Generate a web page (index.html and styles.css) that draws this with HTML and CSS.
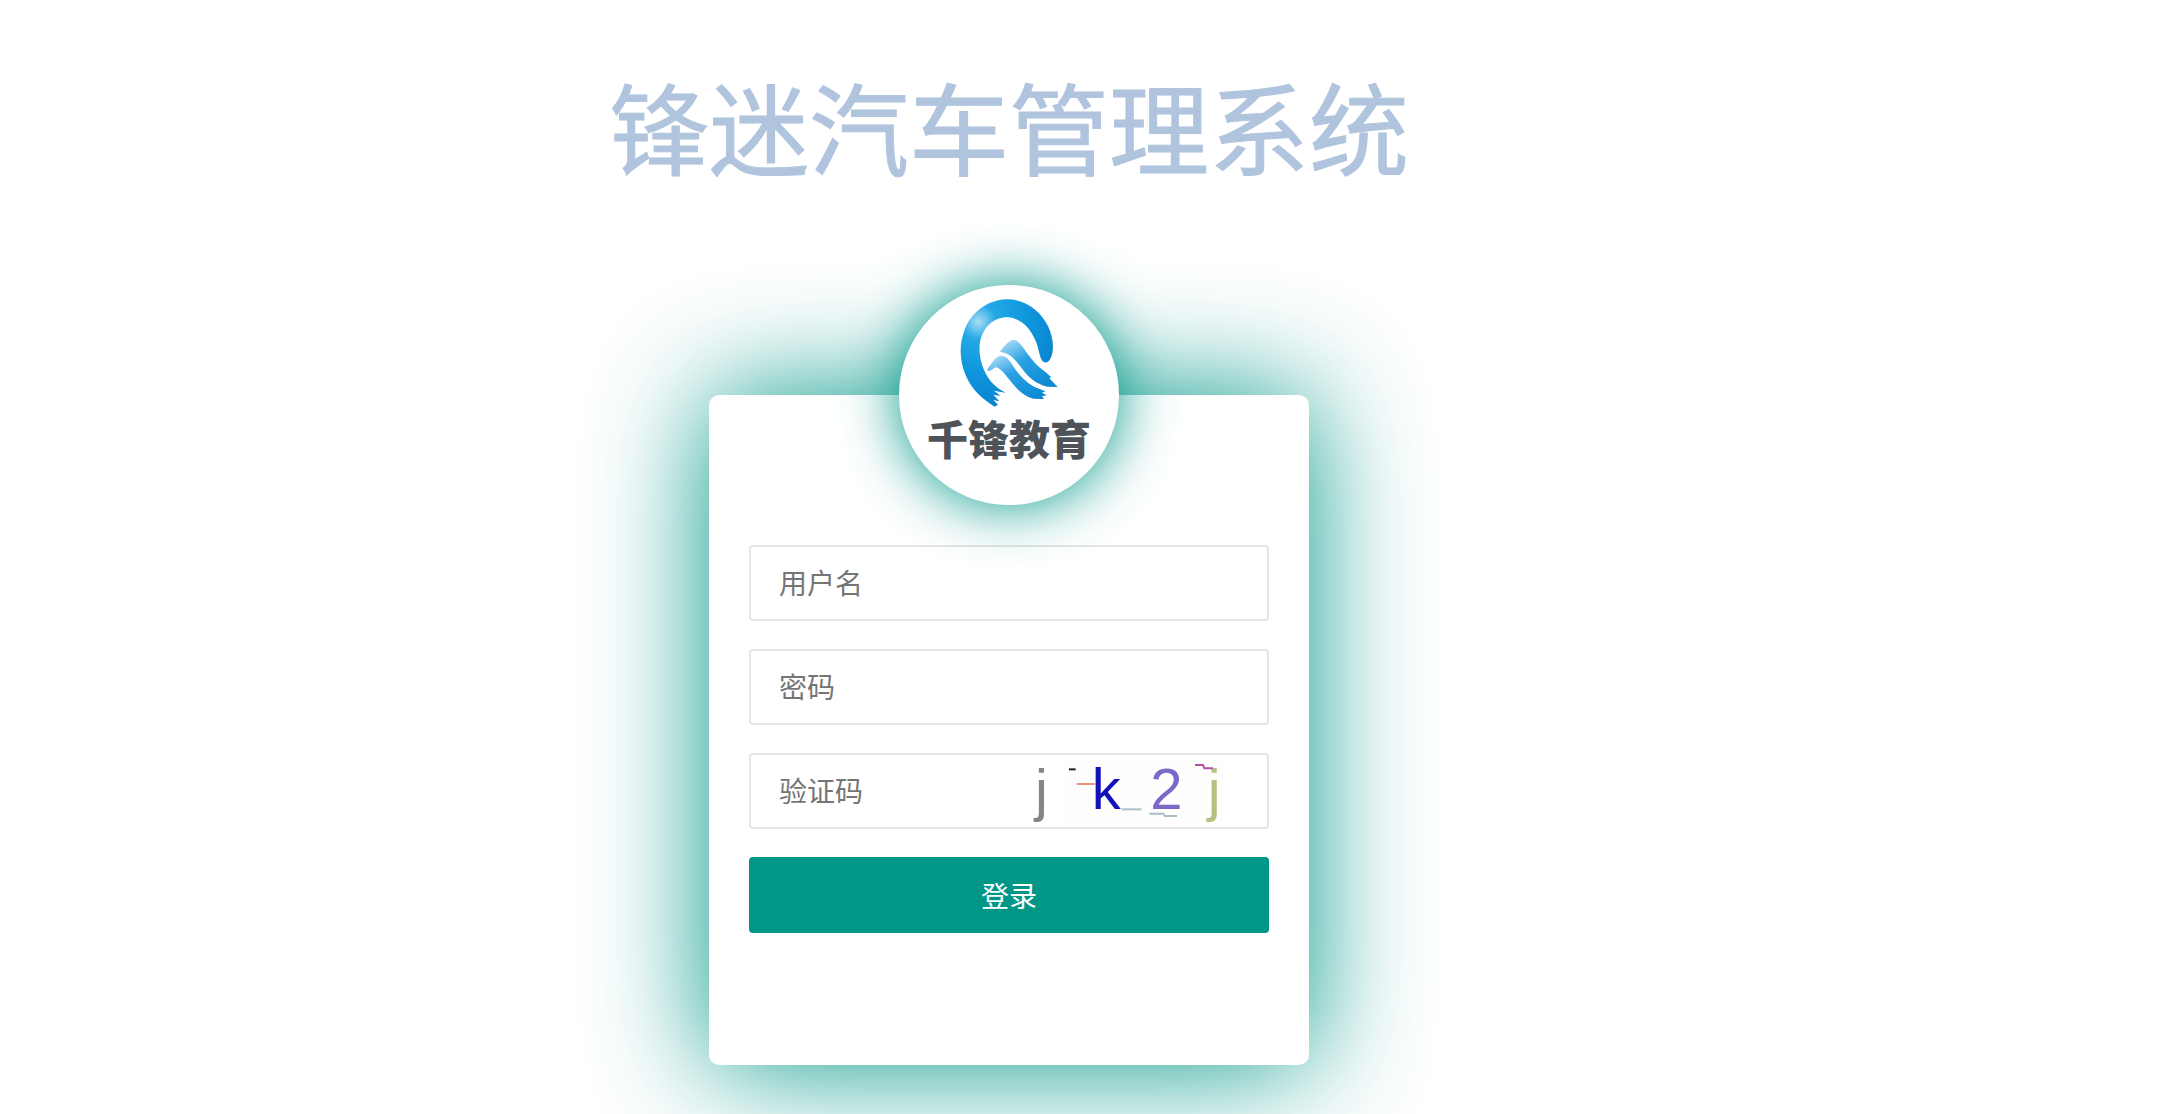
FILE: index.html
```html
<!DOCTYPE html>
<html lang="zh-CN">
<head>
<meta charset="utf-8">
<title>锋迷汽车管理系统</title>
<link rel="stylesheet" href="styles.css">
</head>
<body>
<main class="page">
  <h1 class="title">锋迷汽车管理系统</h1>
  <section class="card">
    <div class="logo">
      <svg class="logo-mark" viewBox="-3 0 360 360" aria-hidden="true">
        <defs>
          <radialGradient id="ringHi" gradientUnits="userSpaceOnUse" cx="85" cy="95" r="240">
            <stop offset="0" stop-color="#a9dcf5"/>
            <stop offset="0.22" stop-color="#25a8e6"/>
            <stop offset="0.6" stop-color="#0f97dd"/>
            <stop offset="1" stop-color="#0a86d0"/>
          </radialGradient>
          <linearGradient id="peak" x1="0.15" y1="0" x2="0.8" y2="1">
            <stop offset="0" stop-color="#a8daf6"/>
            <stop offset="0.4" stop-color="#2ba2e3"/>
            <stop offset="1" stop-color="#0b88d2"/>
          </linearGradient>
        </defs>
        <path fill="url(#ringHi)" d="M134 350C98 328 64 298 47 256C30 215 26 170 42 125C60 70 110 30 170 28C225 27 272 62 295 110C308 140 315 175 302 205C296 220 282 222 274 208C268 195 266 175 258 155C240 110 210 84 172 82C130 82 100 112 90 155C84 195 96 240 122 274C134 288 150 300 166 308L132 302L152 318L130 314L148 334L130 330L144 344Z"/>
        <path fill="url(#peak)" d="M150 184C160 172 172 156 186 150C200 147 210 160 222 176C238 200 258 226 284 244L304 262L298 265L323 291L292 290C262 284 240 266 222 244C206 224 190 198 168 190C160 188 154 188 150 184Z"/>
        <path fill="url(#peak)" d="M110 240C120 226 134 204 148 198C164 194 176 206 188 226C204 252 224 274 252 290L286 304L276 308L290 316L276 319L282 327L250 326C222 318 200 298 182 274C168 256 156 240 140 232C130 230 124 250 110 240Z"/>
      </svg>
      <span class="logo-text">千锋教育</span>
    </div>
    <form class="form">
      <input class="field" type="text" placeholder="用户名">
      <input class="field" type="password" placeholder="密码">
      <div class="captcha-row">
        <input class="field" type="text" placeholder="验证码">
        <svg class="captcha" viewBox="0 0 630 225" aria-label="j k 2 j">
          <rect class="captcha-bg" x="120" y="0" width="480" height="210"/>
          <text class="c-char c-gray" x="30" y="164">j</text>
          <text class="c-char c-blue" x="200" y="163">k</text>
          <text class="c-char c-violet" x="376" y="162">2</text>
          <text class="c-char c-olive" x="548" y="164">j</text>
          <path class="c-line l-black" d="M132 43H152"/>
          <path class="c-line l-orange" d="M155 87H212"/>
          <path class="c-line l-grey" d="M290 163H350"/>
          <path class="c-line l-grey" d="M373 176H414L420 183H456"/>
          <path class="c-line l-purple" d="M510 30H534L538 40H564"/>
        </svg>
      </div>
      <button class="submit" type="button">登录</button>
    </form>
  </section>
</main>
</body>
</html>
```

FILE: styles.css
```css
* {
  box-sizing: border-box;
}

html,
body {
  margin: 0;
  height: 100%;
  background: #fff;
  overflow: hidden;
}

body {
  font-family: "Liberation Sans", "Noto Sans CJK SC", sans-serif;
}

.page {
  width: 2018px;
  display: flex;
  flex-direction: column;
  align-items: center;
}

.title {
  margin: 0;
  padding-top: 63px;
  height: 395px;
  font-size: 100px;
  line-height: 140px;
  font-weight: 400;
  color: #b0c4de;
  -webkit-text-stroke: 1px #b0c4de;
  white-space: nowrap;
}

.card {
  position: relative;
  width: 600px;
  height: 670px;
  padding: 150px 40px 0;
  background: #fff;
  border-radius: 10px;
  box-shadow: 0 0 120px #009688;
}

.logo {
  position: absolute;
  top: -110px;
  left: 190px;
  width: 220px;
  height: 220px;
  padding-top: 5px;
  display: flex;
  flex-direction: column;
  align-items: center;
  background: #fff;
  border-radius: 50%;
  box-shadow: 0 0 60px #009688;
}

.logo-mark {
  width: 120px;
  height: 120px;
  flex: none;
}

.logo-text {
  margin-top: 10px;
  font-size: 41px;
  line-height: 42px;
  font-weight: 900;
  color: #4d5358;
  white-space: nowrap;
}

.form {
  display: flex;
  flex-direction: column;
  gap: 28px;
}

.field {
  display: block;
  width: 100%;
  height: 76px;
  padding: 3px 28px 0;
  border: 2px solid #e6e6e6;
  border-radius: 4px;
  background: #fff;
  font: inherit;
  font-size: 28px;
  color: #757575;
  outline: none;
}

.field::placeholder {
  color: #757575;
  opacity: 1;
}

.captcha-row {
  position: relative;
}

.captcha {
  position: absolute;
  top: 2px;
  left: 276px;
  width: 210px;
  height: 75px;
}

.captcha-bg {
  fill: #fefefc;
}

.c-char {
  font-family: "Liberation Sans", sans-serif;
  font-size: 174px;
}

.c-gray {
  fill: #85858c;
}

.c-blue {
  fill: #1212b8;
}

.c-violet {
  fill: #7b68c8;
}

.c-olive {
  fill: #b7bf83;
}

.c-line {
  fill: none;
  stroke-width: 6;
}

.l-black {
  stroke: #222;
}

.l-orange {
  stroke: #e8957a;
}

.l-grey {
  stroke: #a9c0c6;
}

.l-purple {
  stroke: #b050a4;
}

.submit {
  display: block;
  width: 100%;
  height: 76px;
  border: 0;
  border-radius: 4px;
  background: #009688;
  color: #fff;
  font: inherit;
  font-size: 28px;
}
```
